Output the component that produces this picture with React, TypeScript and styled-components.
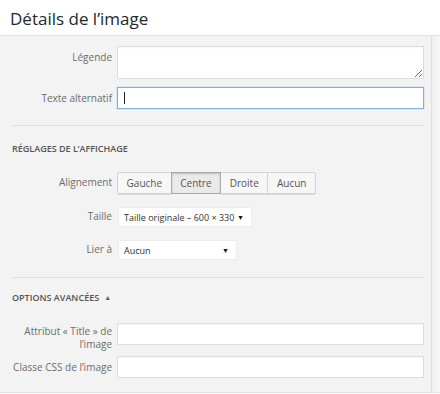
import React from 'react'
import styled, { createGlobalStyle, css } from 'styled-components'

const GlobalStyle = createGlobalStyle`
  html, body {
    margin: 0;
    padding: 0;
    background: #fff;
    font-family: 'Open Sans', 'Liberation Sans', sans-serif;
  }
  * {
    box-sizing: border-box;
  }
`

const alignments = ['Gauche', 'Centre', 'Droite', 'Aucun']

const App: React.FC = () => {
  return (
    <Frame>
      <GlobalStyle />
      <Header>
        <Title>Détails de l’image</Title>
      </Header>
      <Body>
        <Panel>
          <Row top={10}>
            <Label pad={5}>Légende</Label>
            <TextArea />
          </Row>
          <Row top={8}>
            <Label pad={5}>Texte alternatif</Label>
            <FieldWrap>
              <Input focused />
              <Caret />
            </FieldWrap>
          </Row>
          <Divider top={16} />
          <SectionTitle top={17}>Réglages de l’affichage</SectionTitle>
          <Row top={17}>
            <Label pad={4}>Alignement</Label>
            <ButtonGroup>
              {alignments.map((a) => (
                <GroupButton key={a} active={a === 'Centre'}>
                  {a}
                </GroupButton>
              ))}
            </ButtonGroup>
          </Row>
          <Row top={13}>
            <Label pad={3}>Taille</Label>
            <Select width={134}>
              <span>Taille originale – 600 × 330</span>
              <Arrow>▼</Arrow>
            </Select>
          </Row>
          <Row top={13}>
            <Label pad={3}>Lier à</Label>
            <Select width={119}>
              <span>Aucun</span>
              <Arrow>▼</Arrow>
            </Select>
          </Row>
          <Divider top={17} />
          <SectionTitle top={14}>
            Options avancées <Toggle>▲</Toggle>
          </SectionTitle>
          <Row top={19}>
            <Label pad={2} lines>
              Attribut « Title » de
              <br />
              l’image
            </Label>
            <Input />
          </Row>
          <Row top={5}>
            <Label pad={5}>Classe CSS de l’image</Label>
            <Input />
          </Row>
        </Panel>
        <Track />
      </Body>
    </Frame>
  )
}

const Frame = styled.div`
  width: 440px;
  height: 394px;
  display: flex;
  flex-direction: column;
  overflow: hidden;
`

const Header = styled.div`
  height: 36px;
  padding-left: 10px;
  border-bottom: 1px solid #e2e2e2;
  display: flex;
  align-items: center;
  background: #fff;
`

const Title = styled.h1`
  margin: 0;
  font-size: 17px;
  font-weight: 400;
  color: #23282d;
  line-height: 1;
  padding-top: 2px;
`

const Body = styled.div`
  display: flex;
  height: 357px;
  background: #f7f7f7;
`

const Panel = styled.div`
  width: 432px;
  height: 357px;
  padding: 0 7px 0 12px;
  background: #f3f3f3;
  border-right: 1px solid #e0e0e0;
  border-bottom: 1px solid #dedede;
  display: flex;
  flex-direction: column;
`

const Track = styled.div`
  flex: 1;
  background: linear-gradient(to right, #f0f0f0, #f7f7f7);
  border-bottom: 1px solid #e6e6e6;
`

const Row = styled.div<{ top: number }>`
  display: grid;
  grid-template-columns: 105px 1fr;
  align-items: start;
  margin-top: ${(p) => p.top}px;
`

const Label = styled.div<{ pad: number; lines?: boolean }>`
  text-align: right;
  padding-right: 5px;
  padding-top: ${(p) => p.pad}px;
  font-size: 10px;
  line-height: ${(p) => (p.lines ? 13 : 12)}px;
  color: #6c6c6c;
`

const fieldBase = css`
  display: block;
  width: 100%;
  margin: 0;
  background: #fff;
  border: 1px solid #ddd;
  box-shadow: inset 0 1px 2px rgba(0, 0, 0, 0.04);
  font-family: inherit;
  outline: none;
`

const TextArea = styled.textarea`
  ${fieldBase}
  height: 33px;
  resize: vertical;
`

const FieldWrap = styled.div`
  position: relative;
`

const Input = styled.input<{ focused?: boolean }>`
  ${fieldBase}
  height: 22px;
  ${(p) =>
    p.focused &&
    css`
      border-color: #7eaed9;
      box-shadow: 0 0 1px rgba(30, 140, 190, 0.6);
    `}
`

const Caret = styled.span`
  position: absolute;
  left: 7px;
  top: 5px;
  width: 1px;
  height: 12px;
  background: #222;
`

const Divider = styled.div<{ top: number }>`
  margin-top: ${(p) => p.top}px;
  height: 1px;
  background: #e0e0e0;
`

const SectionTitle = styled.div<{ top: number }>`
  margin-top: ${(p) => p.top}px;
  font-size: 9px;
  line-height: 12px;
  font-weight: 600;
  text-transform: uppercase;
  color: #555;
  display: flex;
  align-items: center;
  gap: 5px;
`

const Toggle = styled.span`
  font-size: 7px;
  color: #666;
`

const ButtonGroup = styled.div`
  display: flex;
  width: 198px;
`

const GroupButton = styled.button<{ active?: boolean }>`
  height: 22px;
  padding: 0 8px;
  margin: 0 -1px 0 0;
  border: 1px solid #d4d4d4;
  background: #f7f7f7;
  box-shadow: 0 1px 0 #d8d8d8;
  font-family: inherit;
  font-size: 10px;
  color: #555;
  flex: 1 1 auto;
  &:first-child {
    border-radius: 2px 0 0 2px;
  }
  &:last-child {
    border-radius: 0 2px 2px 0;
  }
  ${(p) =>
    p.active &&
    css`
      position: relative;
      background: #eaeaea;
      border-color: #a9a9a9;
      box-shadow: inset 0 1px 2px rgba(0, 0, 0, 0.2);
      z-index: 1;
    `}
`

const Select = styled.div<{ width: number }>`
  width: ${(p) => p.width}px;
  height: 20px;
  margin-left: 1px;
  padding: 0 7px 0 5px;
  background: #fff;
  border: 1px solid #ececec;
  display: flex;
  align-items: center;
  justify-content: space-between;
  white-space: nowrap;
  font-size: 9px;
  color: #333;
`

const Arrow = styled.span`
  font-size: 7px;
  color: #111;
`

export default App
